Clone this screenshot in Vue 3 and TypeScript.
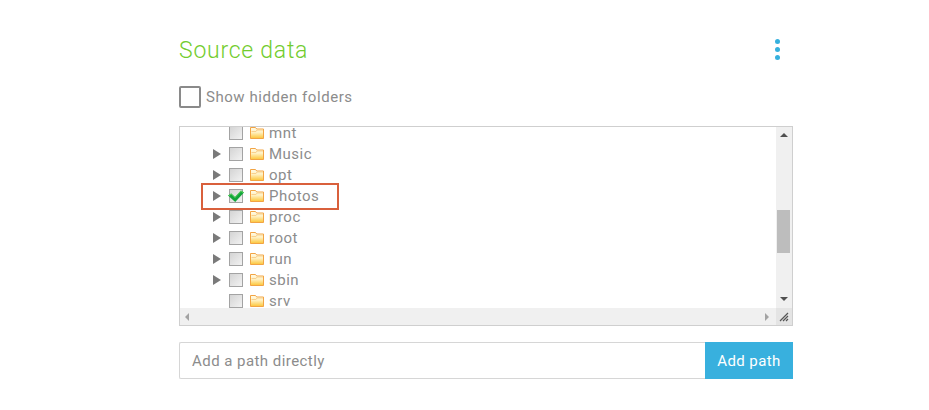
<script setup lang="ts">
interface Row { name: string; arrow: boolean; checked?: boolean }
const rows: Row[] = [
  { name: 'mnt', arrow: false },
  { name: 'Music', arrow: true },
  { name: 'opt', arrow: true },
  { name: 'Photos', arrow: true, checked: true },
  { name: 'proc', arrow: true },
  { name: 'root', arrow: true },
  { name: 'run', arrow: true },
  { name: 'sbin', arrow: true },
  { name: 'srv', arrow: false },
]
</script>

<template>
  <main class="page">
    <header class="head">
      <h1 class="title">Source data</h1>
      <button class="more" aria-label="More"><i></i><i></i><i></i></button>
    </header>
    <label class="hidden-opt"><span class="big-check"></span><span>Show hidden folders</span></label>
    <section class="tree">
      <div class="top">
        <div class="view">
          <ul class="list">
            <li v-for="r in rows" :key="r.name" class="row">
              <span class="arrow" :class="{ off: !r.arrow }"></span>
              <span class="check">
                <svg v-if="r.checked" class="tick" width="18" height="14" viewBox="0 0 18 14">
                  <path d="M1 6.5 L4.2 4.5 L8 8 L14 1.5 L17 3.5 L8.2 13 Z" fill="#12a53a" />
                  <path d="M1 6.5 L4.2 4.5 L8 8 L14 1.5 L17 3.5 L15.8 4 L14 2.8 L8 9 L4.2 5.6 L2.4 7 Z" fill="#58cf5c" />
                </svg>
              </span>
              <svg class="folder" width="14" height="13" viewBox="0 0 14 13">
                <defs>
                  <linearGradient id="fg" x1="0" y1="0" x2="0" y2="1">
                    <stop offset="0" stop-color="#fffbe8" />
                    <stop offset="0.45" stop-color="#fff0c0" />
                    <stop offset="1" stop-color="#fcc537" />
                  </linearGradient>
                </defs>
                <path d="M.5 12.5V1.5h5l1.2 1.5h6.8v9.5z" fill="url(#fg)" stroke="#f2a444" />
                <path d="M1.5 5.5h4.5l1-1.5h6" fill="none" stroke="#f8d08e" />
              </svg>
              <span class="name">{{ r.name }}</span>
            </li>
          </ul>
          <div class="mark"></div>
        </div>
        <div class="vbar">
          <span class="up"></span>
          <span class="thumb"></span>
          <span class="down"></span>
        </div>
      </div>
      <div class="hbar">
        <span class="left"></span>
        <span class="right"></span>
        <span class="grip">
          <svg width="10" height="10" viewBox="0 0 10 10">
            <path d="M1 9 9 1M4 9 9 4M7 9 9 7" stroke="#555" stroke-width="1.2" fill="none" />
          </svg>
        </span>
      </div>
    </section>
    <form class="add" @submit.prevent>
      <input class="path" type="text" placeholder="Add a path directly" />
      <button class="go" type="submit">Add path</button>
    </form>
  </main>
</template>

<style>
html, body { margin: 0; background: #fff; }
</style>

<style scoped>
.page {
  width: 614px;
  margin-left: 179px;
  padding-top: 35px;
  font-family: Roboto, "Liberation Sans", sans-serif;
  color: #8c8c8c;
}
.head {
  display: flex;
  justify-content: space-between;
  align-items: center;
  height: 31px;
}
.title {
  margin: 0;
  font-size: 23px;
  font-weight: 300;
  line-height: 31px;
  letter-spacing: 0.75px;
  color: #72cc2e;
}
.more {
  display: flex;
  flex-direction: column;
  gap: 3px;
  width: 6px;
  margin-right: 12px;
  margin-top: -2px;
  padding: 0;
  border: 0;
  background: none;
}
.more i {
  width: 5px;
  height: 5px;
  border-radius: 50%;
  background: #36b0de;
}
.hidden-opt {
  display: flex;
  align-items: center;
  gap: 5px;
  margin-top: 20px;
  height: 22px;
  font-size: 15px;
  letter-spacing: 0.55px;
}
.big-check {
  box-sizing: border-box;
  width: 22px;
  height: 22px;
  border: 2px solid #8a8a8a;
  border-radius: 2px;
}
.tree {
  box-sizing: border-box;
  display: flex;
  flex-direction: column;
  height: 200px;
  margin-top: 18px;
  border: 1px solid #cfcfcf;
}
.top {
  display: flex;
  flex: 1;
  min-height: 0;
}
.view {
  position: relative;
  flex: 1;
  overflow: hidden;
}
.list {
  margin: -5px 0 0;
  padding: 0 0 0 33px;
  list-style: none;
}
.row {
  display: flex;
  align-items: center;
  height: 21px;
  font-size: 15px;
  letter-spacing: 0.5px;
}
.arrow {
  width: 0;
  height: 0;
  border-left: 8px solid #7a7a7a;
  border-top: 5px solid transparent;
  border-bottom: 5px solid transparent;
}
.arrow.off { visibility: hidden; }
.check {
  position: relative;
  box-sizing: border-box;
  width: 14px;
  height: 14px;
  margin-left: 8px;
  border: 1px solid #a3a3a3;
  background: linear-gradient(135deg, #d4d4d4, #f2f2f2);
}
.tick {
  position: absolute;
  left: -3px;
  top: -1px;
}
.folder { margin-left: 7px; }
.name { margin-left: 5px; }
.mark {
  position: absolute;
  left: 21px;
  top: 56px;
  box-sizing: border-box;
  width: 138px;
  height: 27px;
  border: 2px solid #d9603c;
}
.vbar {
  position: relative;
  flex: none;
  width: 16px;
  background: #f0f0f0;
}
.up, .down {
  position: absolute;
  left: 4px;
  width: 0;
  height: 0;
  border-left: 4px solid transparent;
  border-right: 4px solid transparent;
}
.up { top: 6px; border-bottom: 4px solid #505050; }
.down { bottom: 7px; border-top: 4px solid #505050; }
.thumb {
  position: absolute;
  left: 1px;
  top: 83px;
  width: 13px;
  height: 43px;
  background: #bdbdbd;
}
.hbar {
  position: relative;
  display: flex;
  align-items: center;
  justify-content: space-between;
  flex: none;
  height: 17px;
  padding-left: 5px;
  padding-right: 23px;
  background: #f0f0f0;
}
.left, .right {
  width: 0;
  height: 0;
  border-top: 4px solid transparent;
  border-bottom: 4px solid transparent;
}
.left { border-right: 4px solid #a3a3a3; }
.right { border-left: 4px solid #a3a3a3; }
.grip {
  position: absolute;
  right: 0;
  top: 0;
  display: flex;
  align-items: center;
  justify-content: center;
  width: 16px;
  height: 17px;
  background: #e4e4e4;
}
.add {
  display: flex;
  height: 37px;
  margin-top: 16px;
}
.path {
  box-sizing: border-box;
  flex: 1;
  min-width: 0;
  height: 37px;
  padding: 0 12px;
  border: 1px solid #d6d6d6;
  border-right: 0;
  border-radius: 2px 0 0 2px;
  outline: none;
  font: inherit;
  font-size: 15px;
  letter-spacing: 0.45px;
}
.path::placeholder { color: #8c8c8c; opacity: 1; }
.go {
  width: 88px;
  height: 37px;
  padding: 0;
  border: 0;
  background: #38b0de;
  color: #fff;
  font: inherit;
  font-size: 15px;
  letter-spacing: 0.4px;
}
</style>
